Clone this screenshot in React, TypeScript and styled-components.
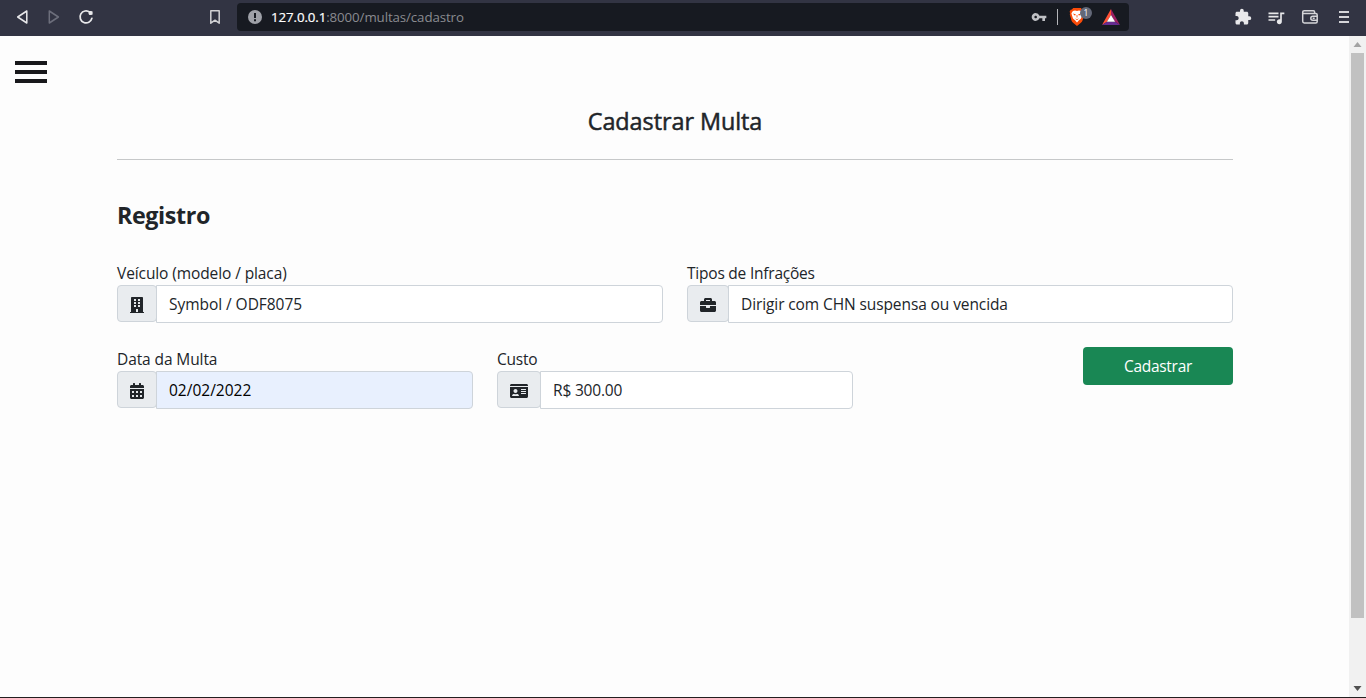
import React from "react";
import styled, { createGlobalStyle } from "styled-components";
import { FaBuilding, FaBriefcase, FaCalendarAlt, FaIdCard } from "react-icons/fa";
import { MdExtension, MdQueueMusic, MdVpnKey } from "react-icons/md";

const GlobalStyle = createGlobalStyle`
  * { box-sizing: border-box; }
  body {
    margin: 0;
    overflow: hidden;
    background: #fdfdfd;
    color: #212529;
    font-family: "Open Sans", "Noto Sans", sans-serif;
    font-size: 15.5px;
    line-height: 24px;
  }
`;

const Window = styled.div`
  display: flex;
  flex-direction: column;
  width: 1366px;
  height: 698px;
  border-bottom: 1px solid #231f20;
`;

const Toolbar = styled.header`
  display: flex;
  height: 36px;
  flex: none;
  align-items: flex-start;
  padding: 3px 12px 0;
  background: #323443;
`;

const Slot = styled.span<{ $w?: number; $gap?: number; $color?: string }>`
  display: flex;
  flex: none;
  align-items: center;
  justify-content: center;
  width: ${(p) => p.$w ?? 20}px;
  height: 28px;
  margin-left: ${(p) => p.$gap ?? 0}px;
  color: ${(p) => p.$color ?? "#e8e8ea"};
  svg { display: block; }
`;

const AddressBar = styled.div`
  display: flex;
  width: 892px;
  height: 28px;
  margin-left: 12px;
  padding-right: 8px;
  align-items: center;
  border-radius: 4px;
  background: #171a21;
`;

const Url = styled.span`
  flex: 1;
  margin-left: 9px;
  color: #8a8b90;
  font-size: 13.3px;
  line-height: 28px;
  letter-spacing: -0.1px;
`;

const Host = styled.span`
  color: #fff;
  -webkit-text-stroke: 0.2px #fff;
`;

const Separator = styled.span`
  width: 1px;
  height: 16px;
  margin-left: 10px;
  background: #b4b5b9;
`;

const Shield = styled(Slot)`
  position: relative;
`;

const Badge = styled.span`
  position: absolute;
  top: 4px;
  left: 13px;
  width: 12px;
  height: 12px;
  border-radius: 6px;
  background: #636878;
  color: #fff;
  font-size: 8.5px;
  line-height: 12px;
  text-align: center;
`;

const Viewport = styled.div`
  display: flex;
  flex: 1;
  min-height: 0;
`;

const Page = styled.main`
  flex: 1;
  padding: 25px 0 0 15px;
`;

const MenuButton = styled.button`
  display: flex;
  flex-direction: column;
  gap: 5px;
  width: 32px;
  padding: 0;
  border: 0;
  background: none;
`;

const MenuLine = styled.span`
  width: 32px;
  height: 4px;
  background: #18181b;
`;

const Content = styled.div`
  width: 1116px;
  margin: 20px 0 0 102px;
`;

const Title = styled.h1`
  height: 57px;
  margin: 0;
  padding-top: 4px;
  border-bottom: 1px solid #c6c8c9;
  font-size: 23.4px;
  font-weight: 400;
  line-height: 29px;
  letter-spacing: -0.05px;
  text-align: center;
  -webkit-text-stroke: 0.5px #212529;
`;

const Section = styled.h2`
  margin: 41px 0 31px;
  font-size: 23.3px;
  font-weight: 700;
  line-height: 29px;
  letter-spacing: -0.4px;
`;

const Row = styled.div`
  display: flex;
  gap: 24px;
  margin-bottom: 24px;
`;

const Field = styled.label<{ $w: number }>`
  display: flex;
  flex-direction: column;
  width: ${(p) => p.$w}px;
`;

const Label = styled.span<{ $ls?: number }>`
  letter-spacing: ${(p) => p.$ls ?? -0.1}px;
`;

const Group = styled.span`
  display: flex;
  align-items: flex-start;
  height: 38px;
`;

const Addon = styled.span<{ $icon: number }>`
  display: flex;
  height: 37px;
  align-items: center;
  padding: 3px 12px 0;
  border: 1px solid #ced4da;
  border-radius: 4px;
  background: #e9ecef;
  svg { width: ${(p) => p.$icon}px; height: 16px; }
`;

const Control = styled.span<{ $filled?: boolean; $ls?: number }>`
  flex: 1;
  height: 38px;
  margin-left: -1px;
  padding: 6px 12px;
  border: 1px solid #ced4da;
  border-radius: 0 4px 4px 0;
  background: ${(p) => (p.$filled ? "#e8f0fe" : "#fff")};
  color: ${(p) => (p.$filled ? "#000" : "#212529")};
  letter-spacing: ${(p) => p.$ls ?? -0.1}px;
`;

const Submit = styled.button`
  width: 150px;
  height: 38px;
  margin-left: auto;
  padding: 0;
  border: 0;
  border-radius: 4px;
  background: #198754;
  color: #fff;
  font: inherit;
  letter-spacing: -0.3px;
`;

const Scrollbar = styled.div`
  display: flex;
  flex-direction: column;
  align-items: center;
  justify-content: space-between;
  width: 17px;
  background: #f1f1f1;
`;

const Thumb = styled.div`
  width: 13px;
  height: 565px;
  margin-bottom: auto;
  background: #c1c1c1;
`;

const Arrow = styled.svg`
  display: block;
  width: 17px;
  height: 17px;
`;

interface InputProps {
  label: string;
  value: string;
  icon: React.ReactNode;
  iconWidth: number;
  width: number;
  filled?: boolean;
  labelSpacing?: number;
  valueSpacing?: number;
}

const Input = ({ label, value, icon, iconWidth, width, filled, labelSpacing, valueSpacing }: InputProps) => (
  <Field $w={width}>
    <Label $ls={labelSpacing}>{label}</Label>
    <Group>
      <Addon $icon={iconWidth}>{icon}</Addon>
      <Control $filled={filled} $ls={valueSpacing}>{value}</Control>
    </Group>
  </Field>
);

const BrowserToolbar = () => (
  <Toolbar>
    <Slot>
      <svg width="20" height="20" viewBox="0 0 20 20" fill="none" stroke="currentColor" strokeWidth="1.5" strokeLinejoin="round">
        <path d="M14.8 4v12L5.7 10z" />
      </svg>
    </Slot>
    <Slot $gap={12} $color="#6c6e7b">
      <svg width="20" height="20" viewBox="0 0 20 20" fill="none" stroke="currentColor" strokeWidth="1.5" strokeLinejoin="round">
        <path d="M5.3 4v12L14.4 10z" />
      </svg>
    </Slot>
    <Slot $gap={12}>
      <svg width="20" height="20" viewBox="0 0 20 20" fill="none" stroke="currentColor" strokeWidth="1.7" strokeLinecap="round">
        <path d="M13.8 5.2A6 6 0 1 0 15.9 11.3" />
        <path d="M13 4.3h3.5v3.4H13z" fill="currentColor" stroke="none" />
        <circle cx="14.4" cy="6" r="2" fill="currentColor" stroke="none" />
      </svg>
    </Slot>
    <Slot $gap={109} $color="#d2d2d5">
      <svg width="20" height="20" viewBox="0 0 20 20" fill="none" stroke="currentColor" strokeWidth="1.5" strokeLinejoin="round">
        <path d="M5.8 3.8h8.4v12.4L10 13.2l-4.2 3z" />
      </svg>
    </Slot>
    <AddressBar>
      <Slot $w={14} $gap={11} $color="#9fa1a8">
        <svg width="14" height="14" viewBox="0 0 14 14">
          <circle cx="7" cy="7" r="7" fill="currentColor" />
          <path d="M6 3h2v5H6zM6 9.3h2v2H6z" fill="#171a21" />
        </svg>
      </Slot>
      <Url><Host>127.0.0.1</Host>:8000/multas/cadastro</Url>
      <Slot $w={16} $color="#bfc0c4"><MdVpnKey size={16} /></Slot>
      <Separator />
      <Shield $w={20} $gap={9}>
        <svg width="20" height="20" viewBox="0 0 20 20">
          <path d="M6.2 1.100h7.600l1.300 1.500 1.300.1 1 2.100-.5 1.200.3 1.400-1.700 6.100c-.3 1-.8 1.600-1.600 2.200L10 19l-3.900-3.300c-.8-.6-1.300-1.200-1.600-2.200L2.800 7.400l.3-1.400-.5-1.200 1-2.100 1.300-.1z" fill="#fb4b08" />
          <path d="M5.900 4 8 3.500l2 .5 2-.5 2.100.5 1.500 2.300-.6 2.100-1 3.200-2.300 1.900L10 15.500l-1.700-2L6 11.600 5 8.400l-.6-2.100z" fill="#fff" />
          <path d="m5.700 6.600 3.100.6-.8 1.500zM14.300 6.600l-3.100.6.8 1.500zM9.600 8h.8v2.600h-.8zM7.900 11.200l2.100 1 2.100-1-2.100 2z" fill="#fb4b08" />
        </svg>
        <Badge>1</Badge>
      </Shield>
      <Slot $w={20} $gap={14}>
        <svg width="20" height="18" viewBox="0 0 20 18">
          <path d="M10 1 1 17l5-3.200L10 7z" fill="#ff5135" />
          <path d="m10 1 9 16-5-3.200L10 7z" fill="#9e1f63" />
          <path d="M1 17h18l-5-3.200H6z" fill="#662d91" />
          <path d="m10 7 4.100 6.800H5.900z" fill="#fff" />
        </svg>
      </Slot>
    </AddressBar>
    <Slot $gap={104}><MdExtension size={18} /></Slot>
    <Slot $gap={13}><MdQueueMusic size={21} /></Slot>
    <Slot $gap={14} $color="#d5d5d9">
      <svg width="20" height="20" viewBox="0 0 20 20" fill="none" stroke="currentColor" strokeWidth="1.500">
        <path d="M14.600 6.500V4.900c0-.7-.4-1.100-1.100-1.100H4.200c-1 0-1.500.5-1.500 1.300v9.200c0 1 .6 1.600 1.600 1.600h11.400c1 0 1.500-.6 1.500-1.500V8.100c0-1-.5-1.500-1.500-1.500H4.200c-1 0-1.500-.6-1.500-1.300M17.200 9.200h-4.400a2 2 0 0 0 0 4h4.400M12.700 11.200h2" />
      </svg>
    </Slot>
    <Slot $gap={14} $color="#d5d5d9">
      <svg width="20" height="20" viewBox="0 0 20 20" fill="currentColor">
        <path d="M5 4h10v2H5zM5 9h10v2H5zM5 14h10v2H5z" />
      </svg>
    </Slot>
  </Toolbar>
);

export default function App() {
  return (
    <>
      <GlobalStyle />
      <Window>
        <BrowserToolbar />
        <Viewport>
          <Page>
            <MenuButton aria-label="Menu">
              <MenuLine />
              <MenuLine />
              <MenuLine />
            </MenuButton>
            <Content>
              <Title>Cadastrar Multa</Title>
              <Section>Registro</Section>
              <Row>
                <Input width={546} label="Veículo (modelo / placa)" value="Symbol / ODF8075" valueSpacing={-0.05} iconWidth={14} icon={<FaBuilding />} />
                <Input width={546} label="Tipos de Infrações" labelSpacing={-0.22} value="Dirigir com CHN suspensa ou vencida" iconWidth={16} icon={<FaBriefcase />} />
              </Row>
              <Row>
                <Input width={356} filled label="Data da Multa" value="02/02/2022" valueSpacing={0} iconWidth={14} icon={<FaCalendarAlt />} />
                <Input width={356} label="Custo" labelSpacing={-0.25} value="R$ 300.00" valueSpacing={-0.18} iconWidth={18} icon={<FaIdCard />} />
                <Submit type="button">Cadastrar</Submit>
              </Row>
            </Content>
          </Page>
          <Scrollbar>
            <Arrow viewBox="0 0 17 17"><path d="m8.500 6 4 5h-8z" fill="#a3a3a3" /></Arrow>
            <Thumb />
            <Arrow viewBox="0 0 17 17"><path d="m8.500 11-4-5h8z" fill="#505050" /></Arrow>
          </Scrollbar>
        </Viewport>
      </Window>
    </>
  );
}
